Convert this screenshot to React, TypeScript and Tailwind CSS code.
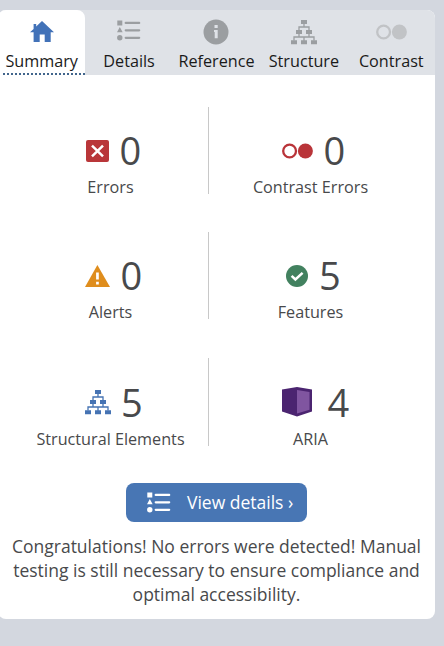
import type { ReactNode } from 'react';

function HomeIcon() {
  return (
    <svg width="24" height="21" viewBox="0 0 24 21" fill="#4272b8">
      <path d="M12 0 24 11.3h-3.3V21h-6v-7.5H9.7V21H3.6v-9.7H0L3.6 7.9V3h2.6v2.5z" />
    </svg>
  );
}

function DetailsIcon() {
  return (
    <svg width="24" height="21" viewBox="0 0 24 21" fill="currentColor">
      <path d="M.3.5h5v5h-5zM2.8 7l2.9 5.2H0z" />
      <circle cx="2.8" cy="17.8" r="2.7" />
      <path d="M8.7 2.9h13.5M8.7 10.3h13.5M8.7 17.8h13.5" stroke="currentColor" strokeWidth="2.2" strokeLinecap="round" />
    </svg>
  );
}

function InfoIcon() {
  return (
    <svg width="26" height="26" viewBox="0 0 26 26">
      <circle cx="13" cy="13" r="12.5" fill="#9b9ea1" />
      <path d="M11.5 6h3.2v3h-3.2zM11 11h3.7v8.3h-3V13H11z" fill="#dfe2e7" />
    </svg>
  );
}

function TreeIcon() {
  return (
    <svg width="26" height="25" viewBox="0 0 26 25" fill="currentColor">
      <path d="M10 0h6v4h-6zM5 10h6v4H5zM15 10h6v4h-6zM0 20.3h6v4H0zM10 20.3h6v4h-6zM20 20.3h6v4h-6z" />
      <path d="M13 4v3M8 10.5V7h10v3.5M8 14v3M18 14v3M3 20.5V17h20v3.5M13 17v4" fill="none" stroke="currentColor" strokeWidth="1.3" />
    </svg>
  );
}

function ContrastIcon() {
  return (
    <svg width="31" height="16" viewBox="0 0 31 16">
      <circle cx="7.6" cy="8" r="6.4" fill="none" stroke="currentColor" strokeWidth="2.3" />
      <circle cx="23.4" cy="8" r="7.5" fill="currentColor" />
    </svg>
  );
}

function ErrorIcon() {
  return (
    <svg width="23" height="22" viewBox="0 0 23 22">
      <rect width="23" height="22" rx="2" fill="#b93639" />
      <path d="m6 5.7 11 10.6M17 5.7 6 16.3" stroke="#fff" strokeWidth="2.5" />
    </svg>
  );
}

function AlertIcon() {
  return (
    <svg width="25" height="22" viewBox="0 0 25 22">
      <path d="M12.4 0 25 22H0z" fill="#df8d1d" />
      <path d="M11.1 7.5h2.7v7h-2.7zM11.1 16.7h2.7v2.8h-2.7z" fill="#fff" />
    </svg>
  );
}

function FeatureIcon() {
  return (
    <svg width="22" height="22" viewBox="0 0 22 22">
      <circle cx="11" cy="11" r="11" fill="#42815f" />
      <path d="m5.6 10.8 3.8 3.7 7.2-6.7" fill="none" stroke="#fff" strokeWidth="2.5" />
    </svg>
  );
}

function AriaIcon() {
  return (
    <svg width="30" height="30" viewBox="0 0 30 30">
      <path d="M0 2.6 15 0l15 2.6v22L15 29.5 0 24.6z" fill="#4b2470" />
      <path d="m15 3 12.5 2v17.8L15 26.5z" fill="#8055a0" />
    </svg>
  );
}

function Tab({ label, icon, active }: { label: string; icon: ReactNode; active?: boolean }) {
  return (
    <button
      className={`flex h-[65px] w-[87.4px] flex-col items-center text-[#9b9ea1] ${active ? 'rounded-t-lg bg-white' : ''}`}
    >
      <span className={`flex h-[38px] items-center justify-center ${active ? 'pt-[4px]' : 'pt-[6px]'}`}>{icon}</span>
      <span className="mt-[2px] whitespace-nowrap text-[16.2px] leading-[22px] text-[#1a1a1a]">{label}</span>
      {active && <span className="ml-[5px] mt-px w-[82px] border-b-2 border-dotted border-[#41658c]" />}
    </button>
  );
}

function Stat({ icon, count, label, row, divider, last }: { icon: ReactNode; count: number; label: string; row: string; divider?: boolean; last?: boolean }) {
  return (
    <div className={`flex flex-col text-[#48494b] ${last ? 'h-[88px] pt-px' : 'h-[87px]'} ${divider ? 'border-r border-[#c8c8c8]' : ''}`}>
      <div className={`mt-[18px] flex h-[50px] items-center ${row}`}>
        <span className={last ? '' : 'pt-[2px]'}>{icon}</span>
        <span className="text-[38px] leading-[50px]">{count}</span>
      </div>
      <div className="whitespace-nowrap pl-px text-center text-[16.2px] leading-[24px]">{label}</div>
    </div>
  );
}

export default function App() {
  return (
    <div className="h-[646px] w-[444px] overflow-hidden bg-[#d3d7df] pt-[10px] font-['Open_Sans','Noto_Sans',sans-serif]">
      <main className="-ml-[2px] h-[609px] w-[437px] rounded-lg bg-white">
        <nav className="flex rounded-t-lg bg-[#dfe2e7]">
          <Tab label="Summary" active icon={<HomeIcon />} />
          <Tab label="Details" icon={<span className="-mt-[4px]"><DetailsIcon /></span>} />
          <Tab label="Reference" icon={<InfoIcon />} />
          <Tab label="Structure" icon={<TreeIcon />} />
          <Tab label="Contrast" icon={<span className="text-[#c1c3c6]"><ContrastIcon /></span>} />
        </nav>
        <section className="grid grid-cols-[197px_202px] gap-y-[38px] pl-[14px] pt-[32px]">
          <Stat divider icon={<ErrorIcon />} count={0} label="Errors" row="pl-[74px] gap-[10.5px]" />
          <Stat icon={<span className="text-[#b93439]"><ContrastIcon /></span>} count={0} label="Contrast Errors" row="pl-[73px] gap-[10.5px]" />
          <Stat divider icon={<AlertIcon />} count={0} label="Alerts" row="pl-[73px] gap-[10.5px]" />
          <Stat icon={<FeatureIcon />} count={5} label="Features" row="pl-[77px] gap-[11px]" />
          <div className="col-span-2 grid grid-cols-subgrid pt-px">
            <Stat last divider icon={<span className="text-[#4673b3]"><TreeIcon /></span>} count={5} label="Structural Elements" row="pl-[73px] gap-[10px]" />
            <Stat last icon={<AriaIcon />} count={4} label="ARIA" row="pl-[73px] gap-[15.5px]" />
          </div>
        </section>
        <button className="ml-[128px] mt-[37px] flex h-[39px] w-[181px] items-center rounded-lg bg-[#4876b4] pl-[21px] text-white">
          <DetailsIcon />
          <span className="ml-[16px] whitespace-nowrap text-[17.5px]">View details ›</span>
        </button>
        <p className="mt-[12px] flex flex-col items-center whitespace-nowrap text-[17.5px] leading-[24px] text-[#48494b]">
          <span>Congratulations! No errors were detected! Manual</span>
          <span>testing is still necessary to ensure compliance and</span>
          <span>optimal accessibility.</span>
        </p>
      </main>
    </div>
  );
}
